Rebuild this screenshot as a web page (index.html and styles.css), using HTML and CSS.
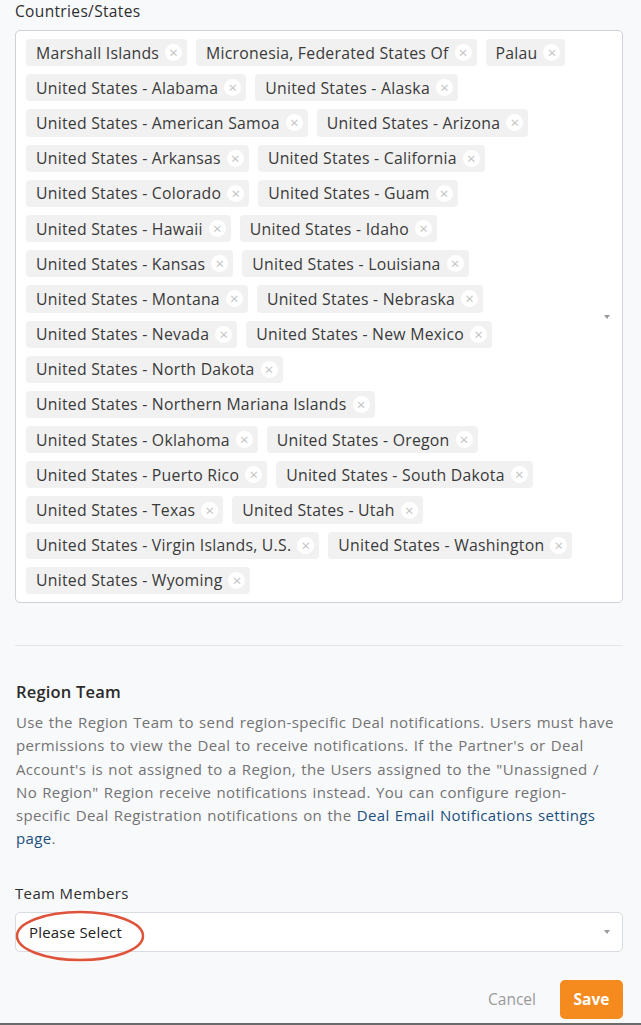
FILE: index.html
```html
<!DOCTYPE html>
<html>
<head>
<meta charset="utf-8">
<link rel="stylesheet" href="styles.css">
</head>
<body>
<div class="page">
  <div class="field-label">Countries/States</div>
  <div class="multi">
    <div class="tags">
      <span class="tag">Marshall Islands<span class="x">×</span></span>
      <span class="tag">Micronesia, Federated States Of<span class="x">×</span></span>
      <span class="tag">Palau<span class="x">×</span></span>
      <span class="tag">United States - Alabama<span class="x">×</span></span>
      <span class="tag">United States - Alaska<span class="x">×</span></span>
      <span class="tag">United States - American Samoa<span class="x">×</span></span>
      <span class="tag">United States - Arizona<span class="x">×</span></span>
      <span class="tag">United States - Arkansas<span class="x">×</span></span>
      <span class="tag">United States - California<span class="x">×</span></span>
      <span class="tag">United States - Colorado<span class="x">×</span></span>
      <span class="tag">United States - Guam<span class="x">×</span></span>
      <span class="tag">United States - Hawaii<span class="x">×</span></span>
      <span class="tag">United States - Idaho<span class="x">×</span></span>
      <span class="tag">United States - Kansas<span class="x">×</span></span>
      <span class="tag">United States - Louisiana<span class="x">×</span></span>
      <span class="tag">United States - Montana<span class="x">×</span></span>
      <span class="tag">United States - Nebraska<span class="x">×</span></span>
      <span class="tag">United States - Nevada<span class="x">×</span></span>
      <span class="tag">United States - New Mexico<span class="x">×</span></span>
      <span class="tag">United States - North Dakota<span class="x">×</span></span>
      <span class="tag">United States - Northern Mariana Islands<span class="x">×</span></span>
      <span class="tag">United States - Oklahoma<span class="x">×</span></span>
      <span class="tag">United States - Oregon<span class="x">×</span></span>
      <span class="tag">United States - Puerto Rico<span class="x">×</span></span>
      <span class="tag">United States - South Dakota<span class="x">×</span></span>
      <span class="tag">United States - Texas<span class="x">×</span></span>
      <span class="tag">United States - Utah<span class="x">×</span></span>
      <span class="tag">United States - Virgin Islands, U.S.<span class="x">×</span></span>
      <span class="tag">United States - Washington<span class="x">×</span></span>
      <span class="tag">United States - Wyoming<span class="x">×</span></span>
    </div>
    <span class="caret"></span>
  </div>

  <hr class="divider">

  <h2 class="section-title">Region Team</h2>
  <p class="help">Use the Region Team to send region-specific Deal notifications. Users must have permissions to view the Deal to receive notifications. If the Partner's or Deal Account's is not assigned to a Region, the Users assigned to the "Unassigned / No Region" Region receive notifications instead. You can configure region-<br>specific Deal Registration notifications on the <a class="link" href="#">Deal Email Notifications settings page</a>.</p>

  <div class="field-label members-label">Team Members</div>
  <div class="select">
    <span class="placeholder">Please Select</span>
    <span class="caret"></span>
    <svg class="annotation" width="132" height="54" viewBox="0 0 132 54"><ellipse cx="66" cy="27" rx="63" ry="24" fill="none" stroke="#e0533b" stroke-width="2.5"/></svg>
  </div>

  <div class="actions">
    <button class="btn-cancel">Cancel</button>
    <button class="btn-save">Save</button>
  </div>
</div>
<div class="bottom-edge"></div>
</body>
</html>
```

FILE: styles.css
```css
html, body {
  margin: 0;
  padding: 0;
  background: #f8f9fb;
}
body {
  font-family: "Open Sans", "Liberation Sans", sans-serif;
  color: #333;
  width: 641px;
  height: 1025px;
  overflow: hidden;
  display: flex;
  flex-direction: column;
}
.page {
  padding: 0 18px 0 15px;
  flex: 1;
}
.field-label {
  font-size: 15.5px;
  letter-spacing: 0.35px;
  font-weight: 500;
  color: #2e2e2e;
  line-height: 22px;
  margin-bottom: 8px;
}
.multi {
  position: relative;
  background: #fff;
  border: 1px solid #cfd2d6;
  border-radius: 5px;
  padding: 8px 32px 8px 10px;
}
.tags {
  display: flex;
  flex-wrap: wrap;
  column-gap: 9px;
  row-gap: 8px;
}
.tag {
  display: inline-flex;
  align-items: center;
  height: 27.2px;
  background: #f1f1f1;
  border-radius: 4px;
  padding: 0 5px 0 10px;
  font-size: 15.8px;
  letter-spacing: 0.25px;
  color: #3a3a3a;
  white-space: nowrap;
}
.x {
  display: inline-flex;
  align-items: center;
  justify-content: center;
  width: 17px;
  height: 17px;
  border-radius: 50%;
  background: #fff;
  color: #c2c2c2;
  font-size: 15px;
  letter-spacing: 0;
  line-height: 1;
  margin-left: 6px;
}
.caret {
  position: absolute;
  right: 12px;
  top: 50%;
  margin-top: -2px;
  width: 0;
  height: 0;
  border-left: 3.5px solid transparent;
  border-right: 3.5px solid transparent;
  border-top: 4px solid #9a9a9a;
}
.divider {
  border: 0;
  border-top: 1px solid #e3e5e8;
  margin: 42px 0 0 0;
}
.section-title {
  font-size: 16.5px;
  letter-spacing: 0.2px;
  font-weight: 600;
  color: #2a2a2a;
  margin: 35px 0 0 1px;
  line-height: 22px;
}
.help {
  margin: 8px 0 0 1px;
  font-size: 15px;
  letter-spacing: 0.35px;
  word-spacing: 1px;
  line-height: 23.3px;
  color: #737373;
}
.link {
  color: #1b4f7d;
  text-decoration: none;
}
.members-label {
  margin-top: 31px;
  font-size: 15px;
  margin-bottom: 8px;
}
.select {
  position: relative;
  box-sizing: border-box;
  height: 40px;
  background: #fff;
  border: 1px solid #d7dbe2;
  border-radius: 5px;
  display: flex;
  align-items: center;
  padding-left: 13px;
}
.placeholder {
  font-size: 15px;
  letter-spacing: 0.2px;
  color: #222;
}
.annotation {
  position: absolute;
  left: -2px;
  top: -4px;
}
.actions {
  display: flex;
  justify-content: flex-end;
  align-items: center;
  gap: 24px;
  margin-top: 28px;
}
.btn-cancel {
  background: none;
  border: 0;
  padding: 0;
  font-family: inherit;
  font-size: 15.5px;
  color: #9a9a9a;
}
.btn-save {
  background: #f58b1f;
  border: 0;
  border-radius: 5px;
  color: #fff;
  font-family: inherit;
  font-weight: 700;
  font-size: 15.5px;
  width: 63px;
  height: 39px;
}
.bottom-edge {
  height: 2px;
  background: #6b6b6b;
}
```
